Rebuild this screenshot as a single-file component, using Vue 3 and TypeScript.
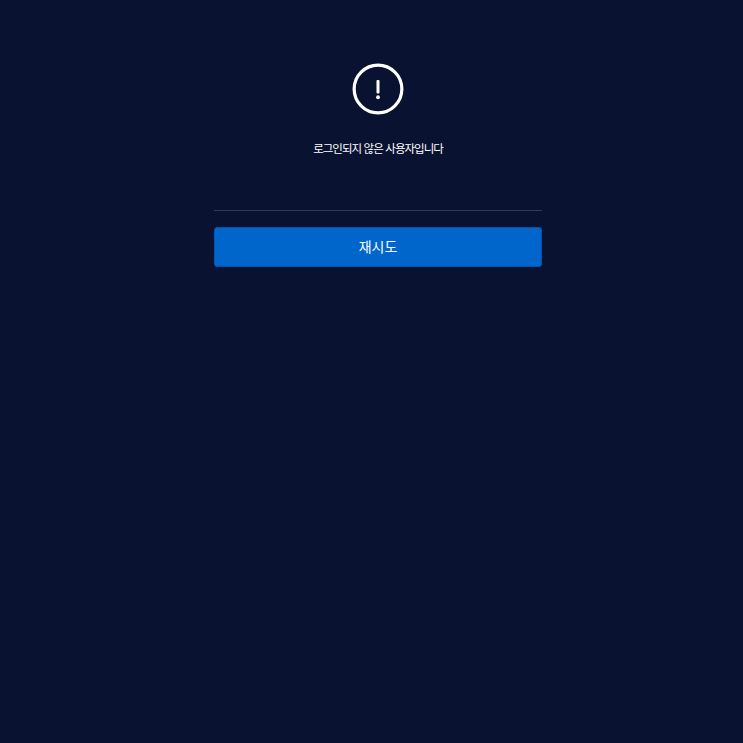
<script setup lang="ts">
const message: string = '로그인되지 않은 사용자입니다'
const retry: string = '재시도'
</script>

<template>
  <main class="page">
    <section class="panel">
      <svg class="icon" width="52" height="52" viewBox="0 0 52 52" aria-hidden="true">
        <circle cx="26" cy="26" r="23.85" fill="none" stroke="#fff" stroke-width="3.2" />
        <rect x="24.5" y="17" width="3" height="13.5" rx="1" fill="#fff" />
        <circle cx="26" cy="34.25" r="1.9" fill="#fff" />
      </svg>
      <p class="message">{{ message }}</p>
      <div class="divider"></div>
      <button class="retry" type="button">{{ retry }}</button>
    </section>
  </main>
</template>

<style scoped>
.page {
  box-sizing: border-box;
  width: 100%;
  min-height: 743px;
  padding-left: 13px;
  background: #0a1232;
  display: flex;
  justify-content: center;
}
.panel {
  width: 328px;
  padding-top: 63px;
  display: flex;
  flex-direction: column;
  align-items: center;
}
.icon {
  display: block;
}
.message {
  margin: 24px 0 1px;
  font-family: "Noto Sans CJK KR", sans-serif;
  font-size: 11.5px;
  font-weight: 400;
  line-height: 18px;
  letter-spacing: -1px;
  word-spacing: 1px;
  color: #fff;
}
.divider {
  width: 100%;
  height: 1px;
  margin-top: 52px;
  background: #333a55;
}
.retry {
  width: 100%;
  height: 40px;
  margin-top: 16px;
  padding: 0 0 2px;
  border: 1px solid #0352ab;
  border-radius: 3px;
  background: #0066cc;
  color: #fff;
  font-family: "Noto Sans CJK KR", sans-serif;
  font-size: 14px;
}
</style>

<style>
html, body {
  margin: 0;
  background: #0a1232;
}
</style>
